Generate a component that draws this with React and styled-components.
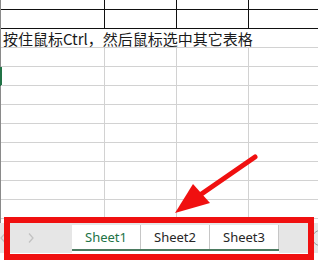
import styled, { createGlobalStyle } from "styled-components";

const GlobalStyle = createGlobalStyle`
  html, body {
    margin: 0;
    padding: 0;
    background: #fff;
    overflow: hidden;
  }
`;

const GRID = "#d2d2d2";
const INK = "#111";
const RED = "#f01010";

const Page = styled.div`
  position: relative;
  width: 318px;
  height: 262px;
  overflow: hidden;
  display: flex;
  flex-direction: column;
  background: #fff;
`;

const Sheet = styled.div`
  height: 223px;
  overflow: hidden;
  flex-shrink: 0;
`;

const Row = styled.div`
  display: grid;
  grid-template-columns: 104px 72px 72px 72px;
  width: 321px;
  height: ${(p) => p.$h || 19}px;
  box-sizing: border-box;
  border-left: 1px solid ${(p) => (p.$marked ? "#217346" : "#8a8a8a")};
  box-shadow: ${(p) => (p.$marked ? "inset 1px 0 0 #217346" : "none")};
`;

const Cell = styled.div`
  border-right: 1px solid ${(p) => (p.$bold ? INK : GRID)};
  border-bottom: 1px solid ${(p) => (p.$bold ? INK : GRID)};
  box-sizing: border-box;
`;

const TextCell = styled.div`
  grid-column: 1 / -1;
  border-bottom: 1px solid ${GRID};
  box-sizing: border-box;
  display: flex;
  align-items: flex-end;
  padding-left: 2px;
  font-family: "Noto Sans CJK SC", "Noto Sans", sans-serif;
  font-size: 15px;
  line-height: 17px;
  color: #1a1a1a;
  white-space: nowrap;
`;

const TabBar = styled.div`
  display: flex;
  align-items: flex-start;
  height: 30px;
  flex-shrink: 0;
  background: #e6e6e6;
`;

const Nav = styled.div`
  width: 72px;
  height: 30px;
  flex-shrink: 0;
  display: flex;
  align-items: center;
  justify-content: space-between;
  padding-right: 38px;
  box-sizing: border-box;
`;

const TabGroup = styled.div`
  flex-shrink: 0;
  margin-top: 2px;
  background: #fff;
  padding-bottom: 2px;
`;

const TabRow = styled.div`
  display: flex;
  border-bottom: 2px solid #4b7a60;
`;

const Tab = styled.div`
  width: 69px;
  height: 24px;
  flex-shrink: 0;
  box-sizing: border-box;
  border-right: 1px solid #c6c6c6;
  display: flex;
  align-items: center;
  justify-content: center;
  font-family: "Noto Sans", "Liberation Sans", sans-serif;
  font-size: 13px;
  color: ${(p) => (p.$active ? "#217346" : "#262626")};
`;

const AddButton = styled.div`
  width: 16px;
  height: 16px;
  margin: 7px 0 0 33px;
  border-radius: 50%;
  border: 1px solid #9a9a9a;
  box-sizing: border-box;
  flex-shrink: 0;
`;

const Frame = styled.div`
  position: absolute;
  left: 4px;
  top: 217px;
  width: 310px;
  height: 43px;
  box-sizing: border-box;
  border: 6px solid ${RED};
  pointer-events: none;
`;

const ArrowLayer = styled.svg`
  position: absolute;
  left: 0;
  top: 0;
  pointer-events: none;
`;

const Chevron = ({ dir }) => (
  <svg width="6" height="10" viewBox="0 0 6 10">
    <path
      d={dir === "left" ? "M5 0.5 L1 5 L5 9.5" : "M1 0.5 L5 5 L1 9.5"}
      fill="none"
      stroke="#c2c2c2"
      strokeWidth="1.3"
    />
  </svg>
);

const GridRow = ({ h, bold, marked }) => (
  <Row $h={h} $marked={marked}>
    <Cell $bold={bold} />
    <Cell $bold={bold} />
    <Cell $bold={bold} />
    <Cell $bold={bold} />
  </Row>
);

const sheets = ["Sheet1", "Sheet2", "Sheet3"];

export default function App() {
  return (
    <Page>
      <GlobalStyle />
      <Sheet>
        <GridRow h={10} bold />
        <GridRow bold />
        <Row>
          <TextCell>按住鼠标Ctrl，然后鼠标选中其它表格</TextCell>
        </Row>
        <GridRow />
        <GridRow marked />
        {Array.from({ length: 8 }).map((_, i) => (
          <GridRow key={i} />
        ))}
      </Sheet>
      <TabBar>
        <Nav>
          <Chevron dir="left" />
          <Chevron dir="right" />
        </Nav>
        <TabGroup>
          <TabRow>
            {sheets.map((s, i) => (
              <Tab key={s} $active={i === 0}>
                {s}
              </Tab>
            ))}
          </TabRow>
        </TabGroup>
        <AddButton />
      </TabBar>
      <Frame />
      <ArrowLayer width="318" height="262" viewBox="0 0 318 262">
        <line
          x1="255"
          y1="157"
          x2="200"
          y2="195"
          stroke={RED}
          strokeWidth="5"
          strokeLinecap="round"
        />
        <polygon points="175,213 193,184 210,203" fill={RED} />
      </ArrowLayer>
    </Page>
  );
}
